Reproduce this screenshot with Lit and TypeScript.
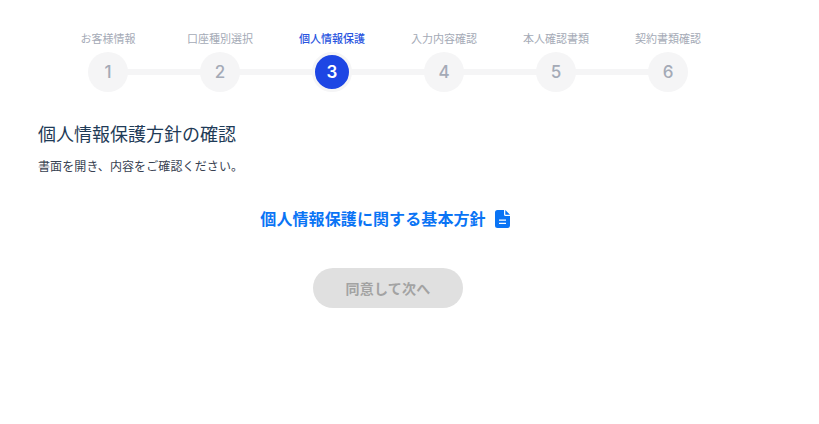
import { LitElement, html, css } from "lit";
import { customElement } from "lit/decorators.js";

const STEPS = ["お客様情報", "口座種別選択", "個人情報保護", "入力内容確認", "本人確認書類", "契約書類確認"];

@customElement("app-root")
export class AppRoot extends LitElement {
  static styles = css`
    :host {
      display: block;
      width: 776px;
      height: 424px;
      background: #fff;
      font-family: Inter, "Noto Sans CJK JP", sans-serif;
    }
    .stepper {
      display: grid;
      grid-template-columns: repeat(6, 112px);
      justify-content: center;
      padding-top: 32px;
    }
    .step {
      display: flex;
      flex-direction: column;
      align-items: center;
      gap: 5px;
      position: relative;
    }
    .label {
      font-size: 11px;
      line-height: 15px;
      font-weight: 400;
      color: #a4aab6;
      white-space: nowrap;
    }
    .active .label {
      color: #2a55e0;
      font-weight: 500;
    }
    .circle {
      width: 40px;
      height: 40px;
      box-sizing: border-box;
      border-radius: 50%;
      background: #f5f5f6;
      color: #a4aab6;
      display: flex;
      align-items: center;
      justify-content: center;
      font-size: 17px;
      font-weight: 500;
      position: relative;
      z-index: 1;
    }
    .active .circle {
      background: #1d46e4;
      border: 3px solid #f5f5f6;
      color: #fff;
      font-weight: 600;
    }
    .line {
      position: absolute;
      left: 50%;
      width: 112px;
      top: 37px;
      height: 6px;
      background: #f5f5f6;
    }
    .main {
      padding: 30px 38px 0;
    }
    h1 {
      margin: 0;
      font-size: 18px;
      line-height: 26px;
      font-weight: 400;
      color: #1f3b57;
    }
    .desc {
      margin: 10px 0 0;
      font-size: 12px;
      line-height: 18px;
      letter-spacing: 0.12px;
      color: #374151;
    }
    .doc {
      margin-top: 31px;
      padding-right: 6px;
      display: flex;
      justify-content: center;
      align-items: center;
      gap: 9px;
      color: #0a74f5;
      font-size: 16px;
      line-height: 24px;
      font-weight: 700;
      letter-spacing: 0.1px;
      text-decoration: none;
    }
    .doc svg {
      width: 15px;
      height: 18px;
      display: block;
    }
    .actions {
      margin-top: 37px;
      display: flex;
      justify-content: center;
    }
    button {
      width: 150px;
      height: 40px;
      border: 0;
      border-radius: 20px;
      background: #e0e0e0;
      color: #a3a3a3;
      font: inherit;
      font-size: 14px;
      font-weight: 700;
      letter-spacing: 0.2px;
      padding: 0;
    }
  `;

  render() {
    return html`
      <div class="stepper">
        ${STEPS.map(
          (s, i) => html`
            <div class="step ${i === 2 ? "active" : ""}">
              <div class="label">${s}</div>
              ${i < 5 ? html`<div class="line"></div>` : ""}
              <div class="circle">${i + 1}</div>
            </div>
          `
        )}
      </div>
      <div class="main">
        <h1>個人情報保護方針の確認</h1>
        <p class="desc">書面を開き、内容をご確認ください。</p>
        <a class="doc">
          <span>個人情報保護に関する基本方針</span>
          <svg viewBox="0 0 15 18" aria-hidden="true">
            <path fill="#0a74f5" fill-rule="evenodd" d="M2.5 0H9V4.5A1.5 1.5 0 0 0 10.5 6H15V15.5A2.5 2.5 0 0 1 12.5 18H2.5A2.5 2.5 0 0 1 0 15.5V2.5A2.5 2.5 0 0 1 2.5 0ZM10.3 0L15 4.7H10.3ZM4 9.5V10.8H11V9.5ZM4 12.8V14.1H11V12.8Z"/>
          </svg>
        </a>
        <div class="actions"><button disabled>同意して次へ</button></div>
      </div>
    `;
  }
}
